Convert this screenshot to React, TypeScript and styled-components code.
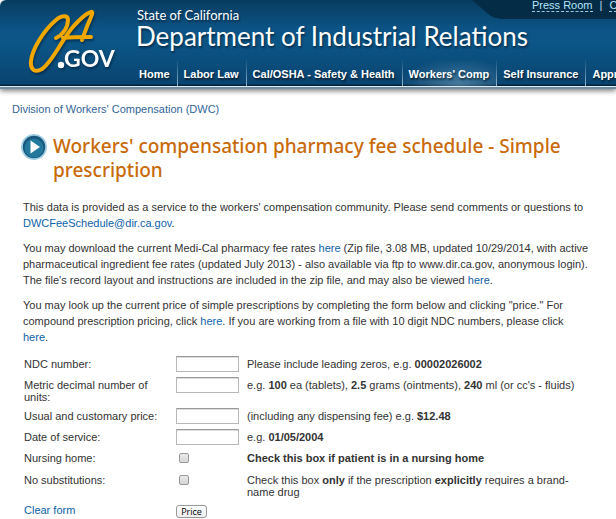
import React from "react";
import styled, { createGlobalStyle } from "styled-components";

const GlobalStyle = createGlobalStyle`
  * { box-sizing: border-box; }
  body {
    margin: 0;
    background: #fff;
    color: #333;
    font: 11px/16px "Liberation Sans", Arial, sans-serif;
    overflow-x: hidden;
  }
  #root { overflow: hidden; }
`;

const Header = styled.header`
  position: relative;
  display: flex;
  height: 89px;
  padding-left: 26px;
  border-top-left-radius: 6px;
  background: linear-gradient(#083c60 0, #0b5384 28px, #0b5687 42px, #0a4470 84px, #03233c 85px, #03233c 86px, #dfe9f0 86px, #dfe9f0 87px, #6f8ba0 87px);
  box-shadow: 0 2px 5px rgba(0, 0, 0, 0.5);
`;

const Logo = styled.svg`
  flex: none;
  width: 92px;
  height: 76px;
  margin-top: 6px;
  filter: drop-shadow(1px 2px 1px rgba(0, 20, 40, 0.5));
`;

const Brand = styled.div`
  flex: 1;
  min-width: 0;
  display: flex;
  flex-direction: column;
  color: #fff;
  font-family: Lato, sans-serif;
  text-shadow: 1px 2px 2px rgba(0, 20, 40, 0.6);
`;

const State = styled.div`
  padding: 7px 0 0 19px;
  font-size: 13px;
  line-height: 16px;
`;

const Department = styled.div`
  padding-left: 18px;
  font-size: 26px;
  line-height: 26px;
  white-space: nowrap;
`;

const Nav = styled.nav`
  display: flex;
  margin-top: auto;
  padding: 0 0 3px 15px;
  font-family: "Liberation Sans", Arial, sans-serif;
`;

const NavLink = styled.a<{ $active?: boolean }>`
  flex: none;
  height: 26px;
  padding: 0 7px 0 6px;
  border-right: 1px solid;
  border-image: linear-gradient(rgba(130, 175, 205, 0), #9dbdd2) 1;
  background: ${(p) =>
    p.$active ? "radial-gradient(ellipse at 60% 90%, rgba(100, 150, 180, 0.65) 0, rgba(60, 115, 155, 0) 75%)" : "none"};
  color: #fff;
  font-size: 11px;
  font-weight: bold;
  line-height: 28px;
  text-decoration: none;
  text-shadow: 1px 2px 2px rgba(0, 0, 0, 0.6);
  white-space: nowrap;
`;

const Utility = styled.div`
  position: absolute;
  top: 0;
  right: 0;
  width: 144px;
  height: 19px;
`;

const UtilityShape = styled.svg`
  position: absolute;
  inset: 0;
  width: 144px;
  height: 19px;
`;

const UtilityLinks = styled.div`
  position: relative;
  display: flex;
  gap: 7px;
  padding-left: 60px;
  overflow: hidden;
  color: #b5dcf0;
  line-height: 11px;
  white-space: nowrap;
`;

const UtilityLink = styled.a`
  flex: none;
  border-bottom: 1px dashed #9cc8e0;
  color: #b4e4fa;
  text-decoration: none;
`;

const Link = styled.a`
  color: #0d62a8;
  text-decoration: none;
`;

const Breadcrumb = styled.nav`
  padding: 12px 12px 0;

  a {
    color: #336699;
  }
`;

const Main = styled.main`
  padding: 17px 26px 0 23px;
`;

const Title = styled.div`
  display: flex;
  gap: 4px;
  margin-left: -2px;

  svg {
    flex: none;
    width: 28px;
    height: 28px;
  }

  h1 {
    margin: 0;
    color: #c96a0a;
    font: 500 19px/24px "Noto Sans", sans-serif;
  }
`;

const Intro = styled.div`
  padding-top: 17px;
`;

const Paragraph = styled.p`
  margin: 0 0 9px;
`;

const Form = styled.form`
  display: grid;
  grid-template-columns: 144px 63px 1fr;
  column-gap: 8px;
  row-gap: 5px;
  align-items: start;
  margin: 11px 0 0 1px;
  line-height: 12px;
`;

const Label = styled.label`
  padding-top: 2px;
`;

const Hint = styled.div`
  padding-top: 2px;
`;

const TextInput = styled.input`
  width: 63px;
  height: 16px;
  padding: 0 2px;
  border: 1px solid #b8b8b8;
  border-top-color: #999;
  background: #fff;
  box-shadow: inset 0 1px 0 #ddd;
  font: inherit;
`;

const CheckBox = styled.input`
  appearance: none;
  width: 10px;
  height: 10px;
  margin: 3px 0 4px 3px;
  border: 1px solid #9a9a9a;
  border-radius: 2px;
  background: linear-gradient(#e9e9e9, #d6d6d6);
`;

const ClearLink = styled(Link)`
  padding-top: 1px;
`;

const PriceButton = styled.button`
  width: 31px;
  height: 13px;
  margin-top: 2px;
  padding: 0;
  border: 1px solid #999;
  border-radius: 3px;
  background: linear-gradient(#fff, #eee);
  color: #000;
  font: 9px/10px "Open Sans", sans-serif;
`;

const navItems = [
  "Home",
  "Labor Law",
  "Cal/OSHA - Safety & Health",
  "Workers' Comp",
  "Self Insurance",
  "Apprenticeship",
];

const fields: { id: string; label: string; check?: boolean; hint: React.ReactNode }[] = [
  { id: "ndc", label: "NDC number:", hint: <>Please include leading zeros, e.g. <b>00002026002</b></> },
  {
    id: "units",
    label: "Metric decimal number of units:",
    hint: <>e.g. <b>100</b> ea (tablets), <b>2.5</b> grams (ointments), <b>240</b> ml (or cc's - fluids)</>,
  },
  { id: "price", label: "Usual and customary price:", hint: <>(including any dispensing fee) e.g. <b>$12.48</b></> },
  { id: "date", label: "Date of service:", hint: <>e.g. <b>01/05/2004</b></> },
  { id: "nursing", label: "Nursing home:", check: true, hint: <b>Check this box if patient is in a nursing home</b> },
  {
    id: "nosub",
    label: "No substitutions:",
    check: true,
    hint: <>Check this box <b>only</b> if the prescription <b>explicitly</b> requires a brand-name drug</>,
  },
];

export default function App() {
  return (
    <>
      <GlobalStyle />
      <Header>
        <Logo viewBox="26 6 92 76" role="img" aria-label="CA.GOV">
          <path
            d="M56 38C63 35 68 27 68 20C68 15 62 15 56 20C43 31 32 50 31 61C30 70 35 73 42 69C52 62 60 43 72 28C80 19 87 13 91 12C94 11 91 17 88 24C85 32 83 37 82 40M63 38C72 37 82 37 91 37"
            fill="none"
            stroke="#f0a800"
            strokeWidth="4"
            strokeLinecap="round"
            strokeLinejoin="round"
          />
          <circle cx="61" cy="65" r="3.2" fill="#fff" />
          <text x="64" y="67" fill="#fff" fontFamily="Lato, sans-serif" fontSize="23" fontWeight="700">GOV</text>
        </Logo>
        <Brand>
          <State>State of California</State>
          <Department>Department of Industrial Relations</Department>
          <Nav>
            {navItems.map((item) => (
              <NavLink key={item} href="#" $active={item === "Workers' Comp"}>{item}</NavLink>
            ))}
          </Nav>
        </Brand>
        <Utility>
          <UtilityShape viewBox="0 0 144 19" aria-hidden="true">
            <path d="M0 0H144V19H32C24 19 19 17 14 12Z" fill="#052c46" />
          </UtilityShape>
          <UtilityLinks>
            <UtilityLink href="#">Press Room</UtilityLink>
            <span>|</span>
            <UtilityLink href="#">Contact</UtilityLink>
          </UtilityLinks>
        </Utility>
      </Header>
      <Breadcrumb>
        <Link href="#">Division of Workers' Compensation (DWC)</Link>
      </Breadcrumb>
      <Main>
        <Title>
          <svg viewBox="0 0 28 28" aria-hidden="true">
            <circle cx="13" cy="13" r="13" fill="#a3cfe4" />
            <circle cx="13" cy="13" r="11.2" fill="#17587c" />
            <circle cx="13" cy="14" r="9.500" fill="#24789e" />
            <path d="M9.500 6.500L19 13L9.500 19.500Z" fill="#fff" />
          </svg>
          <h1>Workers' compensation pharmacy fee schedule - Simple prescription</h1>
        </Title>
        <Intro>
          <Paragraph>
            This data is provided as a service to the workers' compensation community. Please send comments or
            questions to <Link href="#">DWCFeeSchedule@dir.ca.gov</Link>.
          </Paragraph>
          <Paragraph>
            You may download the current Medi-Cal pharmacy fee rates <Link href="#">here</Link> (Zip file, 3.08 MB,
            updated 10/29/2014, with active pharmaceutical ingredient fee rates (updated July 2013) - also available
            via ftp to www.dir.ca.gov, anonymous login). The file's record layout and instructions are included in
            the zip file, and may also be viewed <Link href="#">here</Link>.
          </Paragraph>
          <Paragraph>
            You may look up the current price of simple prescriptions by completing the form below and clicking
            "price." For compound prescription pricing, click <Link href="#">here</Link>. If you are working from a
            file with 10 digit NDC numbers, please click <Link href="#">here</Link>.
          </Paragraph>
        </Intro>
        <Form onSubmit={(e) => e.preventDefault()}>
          {fields.map((f) => (
            <React.Fragment key={f.id}>
              <Label htmlFor={f.id}>{f.label}</Label>
              {f.check ? <CheckBox id={f.id} type="checkbox" /> : <TextInput id={f.id} type="text" />}
              <Hint>{f.hint}</Hint>
            </React.Fragment>
          ))}
          <ClearLink href="#">Clear form</ClearLink>
          <PriceButton type="submit">Price</PriceButton>
        </Form>
      </Main>
    </>
  );
}
